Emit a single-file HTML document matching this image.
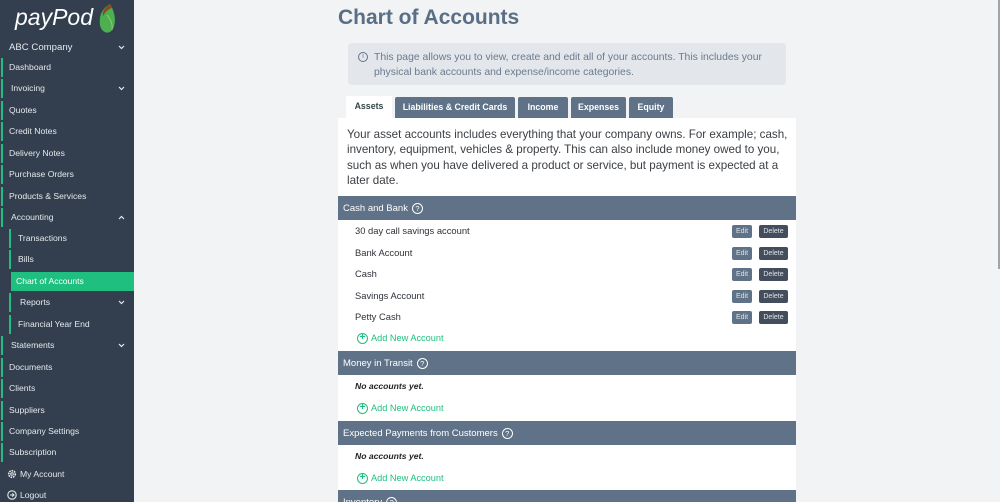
<!DOCTYPE html>
<html><head><meta charset="utf-8"><style>
*{box-sizing:border-box;margin:0;padding:0}
html,body{width:1000px;height:502px;overflow:hidden}
body{background:#f1f3f5;font-family:"Liberation Sans",sans-serif;position:relative}
#sb{position:absolute;left:0;top:0;width:134px;height:502px;background:#333f4e;color:#e6e9ed;font-size:8.6px}
.logo{position:absolute;left:15px;top:4px;font:italic 23px "Liberation Sans",sans-serif;color:#fff}
.it{position:absolute;left:0;width:134px;height:19px;line-height:19px;padding-left:9px}
.it.b::before{content:"";position:absolute;left:1px;top:0;width:2px;height:19px;background:#1fbf7f}
.it.s{padding-left:18px}
.it.s::before{content:"";position:absolute;left:9px;top:0;width:2px;height:19px;background:#1fbf7f}
.it.act{background:#1fbf7f;left:11px;width:123px;padding-left:5px;color:#fff}
.it.act::before{display:none}
.chev{position:absolute;right:9px;top:7px}
#main{position:absolute;left:338px;top:0;width:458px;height:502px;overflow:hidden}
h1{position:absolute;left:0;top:6px;font-size:21px;color:#5a6e85;font-weight:bold;white-space:nowrap}
.info{position:absolute;left:10px;top:43px;width:438px;height:42px;background:#e3e6ea;border-radius:4px;color:#6a7b8e;font-size:10.4px;line-height:15px;padding:7px 0 0 26px}
.info .ic{position:absolute;left:10px;top:9px;width:10px;height:10px;border:1.2px solid #627488;border-radius:50%;font-size:7px;line-height:8px;text-align:center}
.tab{position:absolute;top:97px;height:21px;line-height:20px;font-size:8.8px;font-weight:bold;color:#fff;background:#5f7287;text-align:center;border-radius:2px 2px 0 0}
.tab.on{background:#fff;color:#344}
.panel{position:absolute;left:0;top:118px;width:458px;height:400px;background:#fff}
.intro{position:absolute;left:9px;top:127px;width:445px;font-size:11.6px;line-height:15.3px;color:#3a3f44}
.hd{position:absolute;left:0;width:458px;height:24px;background:#5f7287;color:#fff;font-size:9.5px;display:flex;align-items:center;padding-left:5px}
.q{display:inline-block;width:11px;height:11px;border:1.1px solid #fff;border-radius:50%;font-size:7.5px;line-height:9px;text-align:center;margin-left:4px}
.row{position:absolute;left:17px;font-size:9.4px;color:#2d3238}
.em{position:absolute;left:17px;font-size:8.6px;font-style:italic;font-weight:bold;color:#222}
.add{position:absolute;left:19px;font-size:9.2px;color:#1fbf7f;display:flex;align-items:center;height:12px}
.add i{display:inline-block;width:11px;height:11px;border:1.2px solid #1fbf7f;border-radius:50%;font-style:normal;font-size:10px;line-height:8px;text-align:center;margin-right:3px;font-weight:bold}
.ed,.de{position:absolute;height:13px;line-height:13px;font-size:7px;color:#dfe4ea;text-align:center;border-radius:2px}
.ed{left:394px;width:20px;background:#5f7287}
.de{left:421px;width:29px;background:#434d5b}
</style></head><body>
<div id="sb">
<div class="logo">payPod</div>
<svg style="position:absolute;left:98px;top:3px" width="19" height="31" viewBox="0 0 19 31"><path d="M12 1 C3 6 1 14 2 22 C3 28 8 31 12 29 C18 25 19 12 12 1Z" fill="#4caf50"/><path d="M12 1 C6 5 4 9 5 13 C8 8 11 6 14 5Z" fill="#8b4a1f"/><path d="M9 12 C12 16 15 20 14 27" stroke="#8bd06a" stroke-width="1" fill="none"/></svg>
<div class="it" style="top:38px;font-size:9.6px">ABC Company<svg class="chev" width="7" height="5" viewBox="0 0 7 5"><path d="M1 1l2.5 2.5L6 1" stroke="#e6e9ed" stroke-width="1.2" fill="none"/></svg></div>
<div class="it b" style="top:58px">Dashboard</div>
<div class="it b" style="top:79px;padding-left:11px">Invoicing<svg class="chev" width="7" height="5" viewBox="0 0 7 5"><path d="M1 1l2.5 2.5L6 1" stroke="#e6e9ed" stroke-width="1.2" fill="none"/></svg></div>
<div class="it b" style="top:101px">Quotes</div>
<div class="it b" style="top:122px">Credit Notes</div>
<div class="it b" style="top:144px">Delivery Notes</div>
<div class="it b" style="top:165px">Purchase Orders</div>
<div class="it b" style="top:187px">Products &amp; Services</div>
<div class="it b" style="top:208px;padding-left:11px">Accounting<svg class="chev" width="7" height="5" viewBox="0 0 7 5"><path d="M1 4l2.5-2.5L6 4" stroke="#e6e9ed" stroke-width="1.2" fill="none"/></svg></div>
<div class="it s" style="top:229px">Transactions</div>
<div class="it s" style="top:250px">Bills</div>
<div class="it act" style="top:272px;height:19px">Chart of Accounts</div>
<div class="it s" style="top:293px;padding-left:20px">Reports<svg class="chev" width="7" height="5" viewBox="0 0 7 5"><path d="M1 1l2.5 2.5L6 1" stroke="#e6e9ed" stroke-width="1.2" fill="none"/></svg></div>
<div class="it s" style="top:315px">Financial Year End</div>
<div class="it b" style="top:336px;padding-left:11px">Statements<svg class="chev" width="7" height="5" viewBox="0 0 7 5"><path d="M1 1l2.5 2.5L6 1" stroke="#e6e9ed" stroke-width="1.2" fill="none"/></svg></div>
<div class="it b" style="top:358px">Documents</div>
<div class="it b" style="top:379px">Clients</div>
<div class="it b" style="top:401px">Suppliers</div>
<div class="it b" style="top:422px">Company Settings</div>
<div class="it b" style="top:443px">Subscription</div>
<div class="it" style="top:465px;padding-left:20px"><svg style="position:absolute;left:7px;top:4px" width="10" height="10" viewBox="0 0 10 10"><circle cx="5" cy="5" r="3.3" stroke="#e6e9ed" stroke-width="1.6" fill="none" stroke-dasharray="1.6 0.9"/><circle cx="5" cy="5" r="1.3" stroke="#e6e9ed" stroke-width="1" fill="none"/></svg>My Account</div>
<div class="it" style="top:486px;padding-left:20px"><svg style="position:absolute;left:7px;top:4px" width="10" height="10" viewBox="0 0 10 10"><circle cx="5" cy="5" r="4.2" stroke="#e6e9ed" stroke-width="1.1" fill="none"/><path d="M3 5h4M5.3 3.3L7 5 5.3 6.7" stroke="#e6e9ed" stroke-width="1" fill="none"/></svg>Logout</div>
</div>
<div style="position:absolute;left:998px;top:0;width:2px;height:269px;background:#a0a4a8"></div>
<div id="main">
<h1>Chart of Accounts</h1>
<div class="info"><span class="ic">i</span>This page allows you to view, create and edit all of your accounts. This includes your physical bank accounts and expense/income categories.</div>
<div class="panel"></div>
<div class="tab on" style="left:8px;width:46px;top:96px;height:22px">Assets</div>
<div class="tab" style="left:57px;width:120px">Liabilities &amp; Credit Cards</div>
<div class="tab" style="left:180px;width:50px">Income</div>
<div class="tab" style="left:233px;width:55px">Expenses</div>
<div class="tab" style="left:291px;width:44px">Equity</div>
<div class="intro">Your asset accounts includes everything that your company owns. For example; cash, inventory, equipment, vehicles &amp; property. This can also include money owed to you, such as when you have delivered a product or service, but payment is expected at a later date.</div>
<div class="hd" style="top:196px">Cash and Bank<span class="q">?</span></div>
<div class="row" style="top:225px">30 day call savings account</div><div class="ed" style="top:225px">Edit</div><div class="de" style="top:225px">Delete</div>
<div class="row" style="top:247px">Bank Account</div><div class="ed" style="top:247px">Edit</div><div class="de" style="top:247px">Delete</div>
<div class="row" style="top:268px">Cash</div><div class="ed" style="top:268px">Edit</div><div class="de" style="top:268px">Delete</div>
<div class="row" style="top:290px">Savings Account</div><div class="ed" style="top:290px">Edit</div><div class="de" style="top:290px">Delete</div>
<div class="row" style="top:311px">Petty Cash</div><div class="ed" style="top:311px">Edit</div><div class="de" style="top:311px">Delete</div>
<div class="add" style="top:332px"><i>+</i>Add New Account</div>
<div class="hd" style="top:351px">Money in Transit<span class="q">?</span></div>
<div class="em" style="top:381px">No accounts yet.</div>
<div class="add" style="top:402px"><i>+</i>Add New Account</div>
<div class="hd" style="top:421px">Expected Payments from Customers<span class="q">?</span></div>
<div class="em" style="top:451px">No accounts yet.</div>
<div class="add" style="top:472px"><i>+</i>Add New Account</div>
<div class="hd" style="top:490px">Inventory<span class="q">?</span></div>
</div>
</body></html>
